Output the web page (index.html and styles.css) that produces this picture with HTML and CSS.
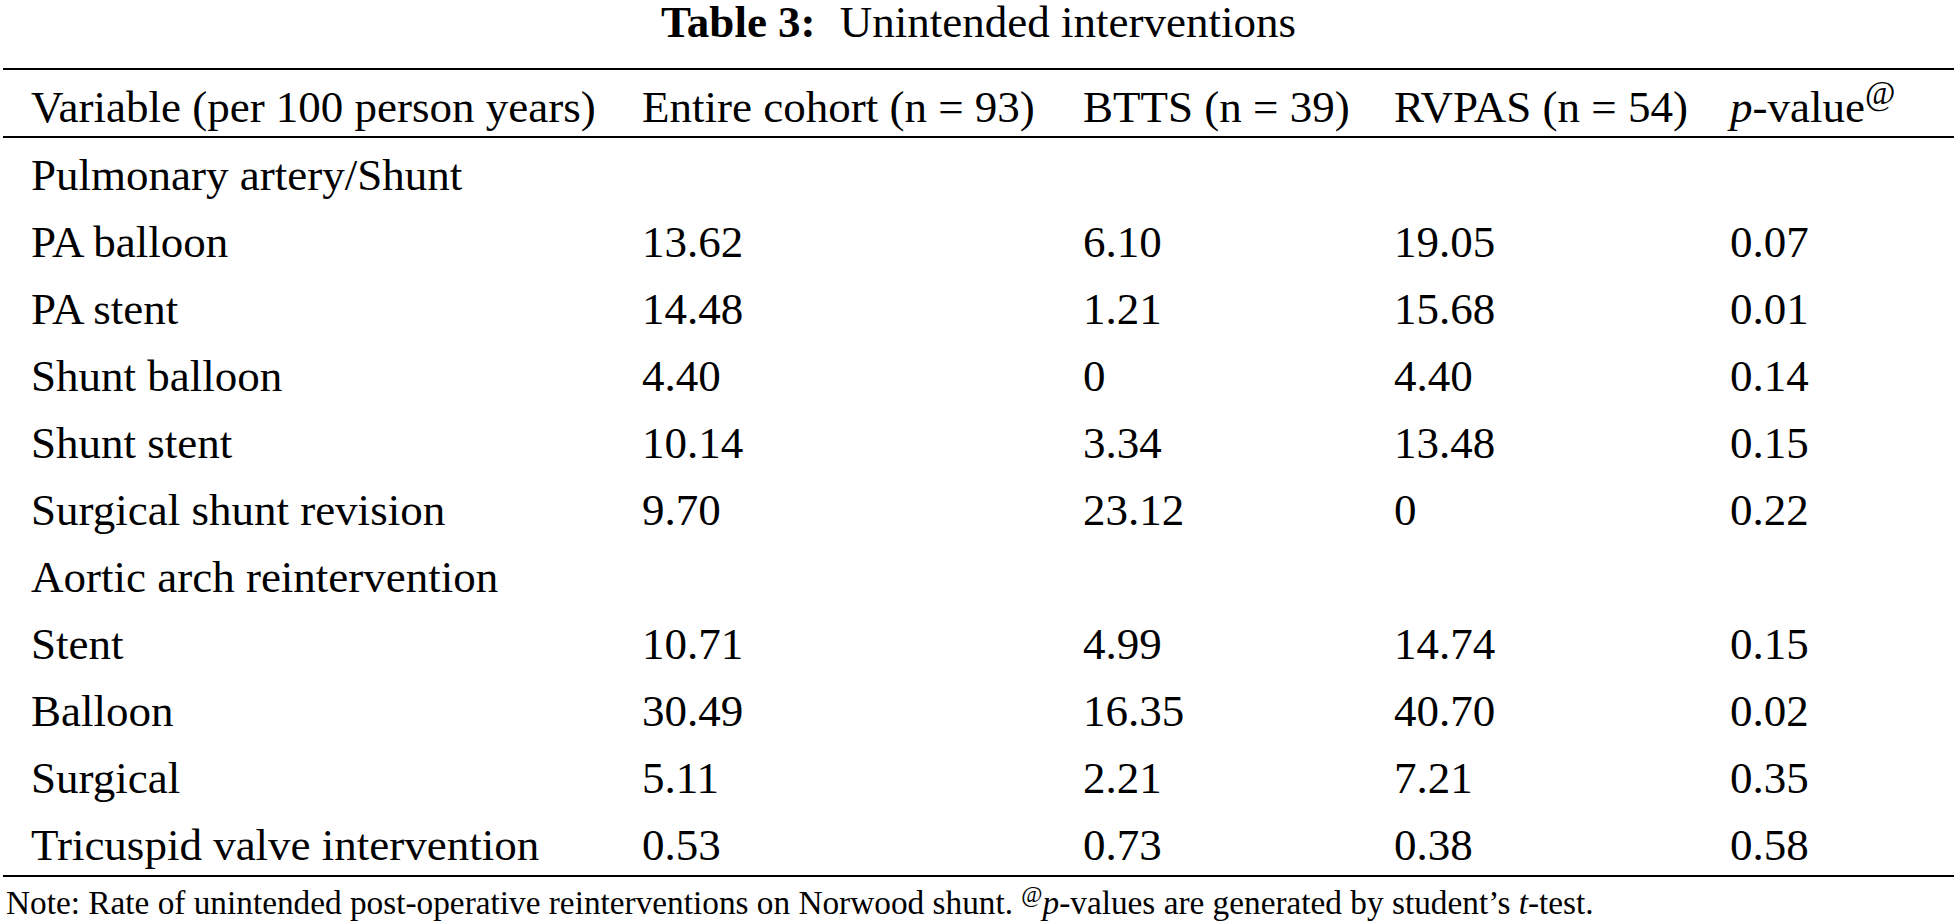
FILE: index.html
```html
<!DOCTYPE html>
<html>
<head>
<meta charset="utf-8">
<link rel="stylesheet" href="styles.css">
</head>
<body>
<div class="page">
  <div class="title"><span class="title-label">Table 3:</span> Unintended interventions</div>
  <table class="data">
    <colgroup>
      <col class="c1"><col class="c2"><col class="c3"><col class="c4"><col class="c5">
    </colgroup>
    <thead>
      <tr>
        <th class="first">Variable (per 100 person years)</th>
        <th>Entire cohort (n = 93)</th>
        <th>BTTS (n = 39)</th>
        <th>RVPAS (n = 54)</th>
        <th><i>p</i>-value<sup class="at">@</sup></th>
      </tr>
    </thead>
    <tbody>
      <tr><td class="first">Pulmonary artery/Shunt</td><td></td><td></td><td></td><td></td></tr>
      <tr><td class="first">PA balloon</td><td>13.62</td><td>6.10</td><td>19.05</td><td>0.07</td></tr>
      <tr><td class="first">PA stent</td><td>14.48</td><td>1.21</td><td>15.68</td><td>0.01</td></tr>
      <tr><td class="first">Shunt balloon</td><td>4.40</td><td>0</td><td>4.40</td><td>0.14</td></tr>
      <tr><td class="first">Shunt stent</td><td>10.14</td><td>3.34</td><td>13.48</td><td>0.15</td></tr>
      <tr><td class="first">Surgical shunt revision</td><td>9.70</td><td>23.12</td><td>0</td><td>0.22</td></tr>
      <tr><td class="first">Aortic arch reintervention</td><td></td><td></td><td></td><td></td></tr>
      <tr><td class="first">Stent</td><td>10.71</td><td>4.99</td><td>14.74</td><td>0.15</td></tr>
      <tr><td class="first">Balloon</td><td>30.49</td><td>16.35</td><td>40.70</td><td>0.02</td></tr>
      <tr><td class="first">Surgical</td><td>5.11</td><td>2.21</td><td>7.21</td><td>0.35</td></tr>
      <tr><td class="first">Tricuspid valve intervention</td><td>0.53</td><td>0.73</td><td>0.38</td><td>0.58</td></tr>
    </tbody>
  </table>
  <p class="note">Note: Rate of unintended post-operative reinterventions on Norwood shunt. <sup class="note-at">@</sup><i>p</i>-values are generated by student’s <i>t</i>-test.</p>
</div>
</body>
</html>
```
FILE: styles.css
```css
html, body {
  margin: 0;
  padding: 0;
  background: #fff;
}
.page {
  font-family: "Liberation Serif", "Times New Roman", serif;
  color: #000;
  padding: 0 3px;
}
.title {
  font-size: 45px;
  line-height: 44px;
  text-align: center;
  margin-bottom: 24px;
}
.title-label {
  font-weight: bold;
  margin-right: 13px;
}
.data {
  width: 1951px;
  table-layout: fixed;
  border-collapse: collapse;
  font-size: 45px;
  border-top: 2px solid #000;
  border-bottom: 2px solid #000;
}
.c1 { width: 639px; }
.c2 { width: 441px; }
.c3 { width: 311px; }
.c4 { width: 336px; }
.c5 { width: 224px; }
.data th, .data td {
  font-weight: normal;
  text-align: left;
  white-space: nowrap;
  padding: 8px 0 0 0;
  vertical-align: top;
}
.data thead th {
  line-height: 58px;
  border-bottom: 2px solid #000;
}
.data tbody td {
  line-height: 59px;
}
.data .first {
  padding-left: 28px;
}
.at {
  font-size: 33px;
  line-height: 0;
  vertical-align: 18px;
}
.note {
  margin: 0;
  padding-left: 3px;
  padding-top: 4px;
  font-size: 33.3px;
  line-height: 44px;
}
.note-at {
  font-size: 23px;
  line-height: 0;
  vertical-align: 12px;
}
```
